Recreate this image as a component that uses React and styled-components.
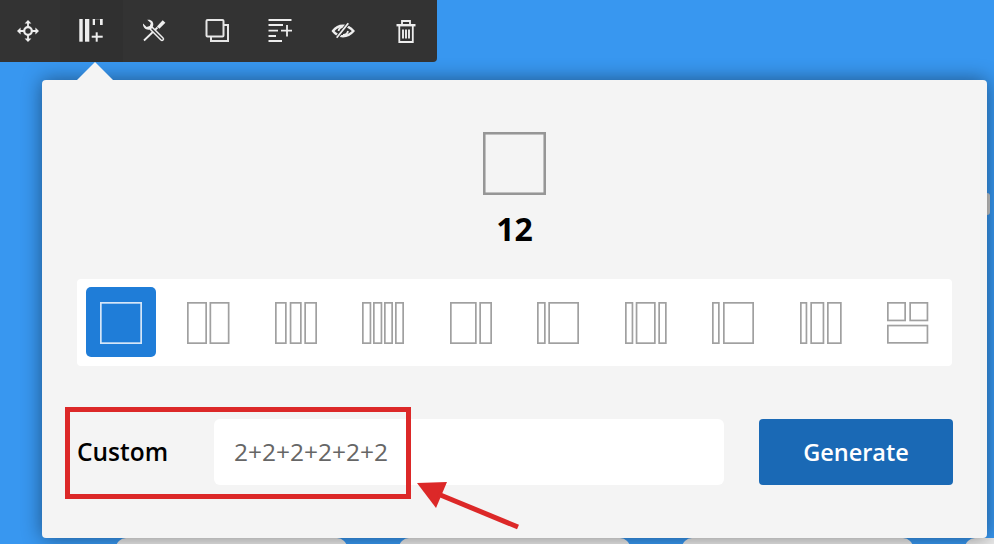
import styled, { createGlobalStyle } from 'styled-components'

const GlobalStyle = createGlobalStyle`
  html, body {
    margin: 0;
    padding: 0;
    background: #3897f0;
    font-family: "Open Sans", "Liberation Sans", sans-serif;
  }
`

const Page = styled.div`
  position: relative;
  width: 994px;
  height: 544px;
  overflow: hidden;
  background: #3897f0;
`

const Toolbar = styled.div`
  position: relative;
  z-index: 2;
  display: flex;
  width: 437px;
  height: 62px;
  box-sizing: border-box;
  background: #333333;
  border-bottom-right-radius: 4px;
`

const ToolButton = styled.div`
  position: relative;
  display: flex;
  align-items: center;
  justify-content: center;
  width: 63px;
  flex: none;
  background: ${({ $active }) => ($active ? '#303030' : 'transparent')};

  &:first-child {
    margin-left: -3.5px;
  }

  svg {
    display: block;
  }
`

const Caret = styled.span`
  position: absolute;
  left: 50%;
  top: 62px;
  margin-left: -14px;
  width: 0;
  height: 0;
  border-left: 18px solid transparent;
  border-right: 18px solid transparent;
  border-bottom: 18px solid #f4f4f4;
`

const Panel = styled.div`
  position: relative;
  z-index: 1;
  display: flex;
  flex-direction: column;
  align-items: center;
  box-sizing: border-box;
  width: 945px;
  height: 458px;
  margin: 18px 0 0 42px;
  padding: 52px 35px 0;
  background: #f4f4f4;
  border-radius: 4px;
  box-shadow: 0 0 20px rgba(0, 0, 0, 0.45);
`

const Total = styled.div`
  margin-top: 12px;
  font-size: 32px;
  line-height: 44px;
  font-weight: 700;
  color: #000;
`

const LayoutRow = styled.div`
  display: grid;
  grid-template-columns: repeat(10, 1fr);
  justify-items: center;
  align-self: stretch;
  margin-top: 28px;
  padding: 8px 0 9px;
  background: #fff;
  border-radius: 4px;
`

const LayoutTile = styled.div`
  display: flex;
  align-items: center;
  justify-content: center;
  box-sizing: border-box;
  width: 70px;
  height: 70px;
  padding-top: 2px;
  border-radius: 5px;
  background: ${({ $active }) => ($active ? '#1f7dd8' : 'transparent')};

  svg {
    overflow: visible;
  }
`

const CustomRow = styled.div`
  display: flex;
  align-items: stretch;
  align-self: stretch;
  height: 66px;
  margin: 53px -1px 0 0;
`

const CustomLabel = styled.label`
  display: flex;
  align-items: center;
  flex: none;
  width: 137px;
  padding-bottom: 2px;
  font-size: 24.5px;
  font-weight: 600;
  color: #000;
`

const CustomInput = styled.div`
  display: flex;
  align-items: center;
  flex: 1;
  padding: 0 0 2px 20px;
  background: #fff;
  border-radius: 6px;
  font-size: 24.5px;
  color: #666;
`

const GenerateButton = styled.button`
  flex: none;
  width: 194px;
  margin-left: 35px;
  border: none;
  border-radius: 4px;
  background: #1a69b5;
  color: #fff;
  font-family: inherit;
  font-size: 23.5px;
  font-weight: 600;
`

const CardRow = styled.div`
  display: flex;
  gap: 52px;
  padding-left: 116px;
`

const Card = styled.div`
  flex: none;
  width: 231px;
  height: 20px;
  background: #e9e9e9;
  border-radius: 10px 10px 0 0;
`

const Sliver = styled.div`
  position: absolute;
  top: 193px;
  left: 987px;
  width: 3px;
  height: 22px;
  background: #c9c9c9;
  border-radius: 0 3px 3px 0;
`

const Highlight = styled.div`
  position: absolute;
  z-index: 3;
  left: 65px;
  top: 407px;
  width: 346px;
  height: 92px;
  box-sizing: border-box;
  border: 5px solid #dc2828;
`

const Annotation = styled.svg`
  position: absolute;
  z-index: 3;
  left: 0;
  top: 0;
`

function MoveIcon() {
  return (
    <svg width="24" height="24" viewBox="0 0 24 24" fill="none" stroke="#eeeeee">
      <circle cx="12" cy="12" r="3.8" strokeWidth="2.2" />
      <path d="M12 8V3M12 16v5M8 12H3M16 12h5" strokeWidth="1.8" />
      <path d="M8.6 4.6 12 1l3.4 3.6zM8.6 19.4 12 23l3.4-3.6zM4.6 8.6 1 12l3.6 3.4zM19.4 8.6 23 12l-3.6 3.4z" fill="#eeeeee" stroke="none" />
    </svg>
  )
}

function ColumnsIcon() {
  return (
    <svg width="26" height="24" viewBox="0 0 26 24">
      <g fill="#eeeeee">
        <rect x="1.3" y="0" width="3.4" height="22.7" />
        <rect x="7" y="0" width="4.3" height="22.7" />
        <rect x="14.7" y="0" width="2.3" height="6" />
        <rect x="22" y="0" width="2.7" height="6" />
        <rect x="14.7" y="0" width="10" height="0.8" opacity="0.3" />
        <rect x="17.7" y="13.3" width="2" height="9.4" />
        <rect x="13.7" y="16.7" width="11" height="2" />
      </g>
    </svg>
  )
}

function ToolsIcon() {
  return (
    <svg width="24" height="24" viewBox="0 0 24 24" fill="none">
      <path d="M2 21.5 15.5 8.5" stroke="#eeeeee" strokeWidth="1.8" />
      <path d="M20.7 1.3 23.4 3.7 17.4 9.7 14.9 7.4z" fill="#eeeeee" />
      <path d="M1 4.6 4.6 8 7.8 7 8.8 4 5.2 .8C8.8 0 12 2.6 11.2 6.4L10.2 9 7.6 10.6C4.6 11.6 .6 9 1 4.6z" fill="#eeeeee" />
      <path d="M9 9 20 20" stroke="#eeeeee" strokeWidth="4.4" strokeLinecap="round" />
      <path d="M10 10 20 20" stroke="#333333" strokeWidth="1.4" strokeLinecap="round" />
    </svg>
  )
}

function CopyIcon() {
  return (
    <svg width="24" height="24" viewBox="0 0 24 24" fill="none" stroke="#e6e6e6" strokeWidth="2">
      <rect x="1.5" y="1" width="17" height="16.5" rx="1" />
      <path d="M19 6h4v16H6v-4" />
    </svg>
  )
}

function ListPlusIcon() {
  return (
    <svg width="24" height="24" viewBox="0 0 24 24" fill="none" stroke="#eeeeee" strokeWidth="1.8">
      <path d="M0.5 1H23.5M0.5 6H15M0.5 11.7H10M0.5 17H8M0.5 22H14M19 6v11.5M13 11.7H24" />
    </svg>
  )
}

function EyeOffIcon() {
  return (
    <svg width="24" height="24" viewBox="0 0 24 24" fill="none" stroke="#eeeeee">
      <path d="M2 12C5 8 8.5 6.8 12 6.8S19 8 22.4 12C19 16 15.5 17.2 12 17.2S5 16 2 12z" strokeWidth="2.4" />
      <path d="M7.5 12a5 5 0 0 1 5-4M17 12a5 5 0 0 1-5 4" strokeWidth="1.8" />
      <path d="M5.7 18.8 17.3 4.3" stroke="#333333" strokeWidth="3.6" />
      <path d="M5.7 18.8 17.3 4.3" strokeWidth="1.8" />
    </svg>
  )
}

function TrashIcon() {
  return (
    <svg width="20" height="24" viewBox="0 -1 20 24" fill="none" stroke="#eeeeee" strokeWidth="1.8">
      <path d="M0.5 5.2H19.5" strokeWidth="2.4" />
      <path d="M6 4.5V1H14V4.5" />
      <path d="M3.3 5.5V22H16.8V5.5" />
      <path d="M7 9.5V18.500M10 9.5V18.500M13 9.5V18.500" strokeWidth="1.9" />
    </svg>
  )
}

const tools = [MoveIcon, ColumnsIcon, ToolsIcon, CopyIcon, ListPlusIcon, EyeOffIcon, TrashIcon]

// each rect is [x, y, width, height] by outer edges inside a 42 box
const layouts = [
  [[0, 0, 42, 42]],
  [[0, 0, 20, 42], [22.5, 0, 20, 42]],
  [[0, 0, 11.7, 42], [14.7, 0, 12, 42], [29.3, 0, 12.7, 42]],
  [[0, 0, 9.3, 42], [11, 0, 9.3, 42], [22, 0, 9, 42], [33, 0, 9, 42]],
  [[0, 0, 26.7, 42], [29.3, 0, 12.7, 42]],
  [[0, 0, 8.7, 42], [11.3, 0, 30.7, 42]],
  [[0, 0, 8.3, 42], [10.7, 0, 20, 42], [33.3, 0, 8.4, 42]],
  [[0, 0, 7.7, 42], [11, 0, 31, 42]],
  [[0, 0, 7.3, 42], [10.3, 0, 14, 42], [27, 0, 14.7, 42]],
  [[0, 0, 19, 19.3], [22.3, 0, 19, 19.3], [0, 22.7, 41.3, 19]],
]

function LayoutIcon({ rects, size = 42, color = '#a0a0a0' }) {
  return (
    <svg width={size} height={size} viewBox="0 0 42 42" fill="none" stroke={color} strokeWidth="1.7">
      {rects.map((r, i) => (
        <rect key={i} x={r[0] + 0.85} y={r[1] + 0.85} width={r[2] - 1.7} height={r[3] - 1.7} />
      ))}
    </svg>
  )
}

export default function App() {
  return (
    <Page>
      <GlobalStyle />
      <Toolbar>
        {tools.map((Icon, i) => (
          <ToolButton key={i} $active={i === 1}>
            <Icon />
            {i === 1 && <Caret />}
          </ToolButton>
        ))}
      </Toolbar>
      <Sliver />
      <Panel>
        <LayoutIcon rects={layouts[0]} size={63} color="#969696" />
        <Total>12</Total>
        <LayoutRow>
          {layouts.map((rects, i) => (
            <LayoutTile key={i} $active={i === 0}>
              <LayoutIcon rects={rects} color={i === 0 ? '#d5e6f8' : '#a0a0a0'} />
            </LayoutTile>
          ))}
        </LayoutRow>
        <CustomRow>
          <CustomLabel>Custom</CustomLabel>
          <CustomInput>2+2+2+2+2+2</CustomInput>
          <GenerateButton>Generate</GenerateButton>
        </CustomRow>
      </Panel>
      <CardRow>
        <Card />
        <Card />
        <Card />
        <Card />
      </CardRow>
      <Highlight />
      <Annotation width="994" height="544" viewBox="0 0 994 544">
        <path d="M417 483 447 482 436 508z" fill="#dc2828" />
        <path d="M438 494 518 527" stroke="#dc2828" strokeWidth="5" fill="none" />
      </Annotation>
    </Page>
  )
}
